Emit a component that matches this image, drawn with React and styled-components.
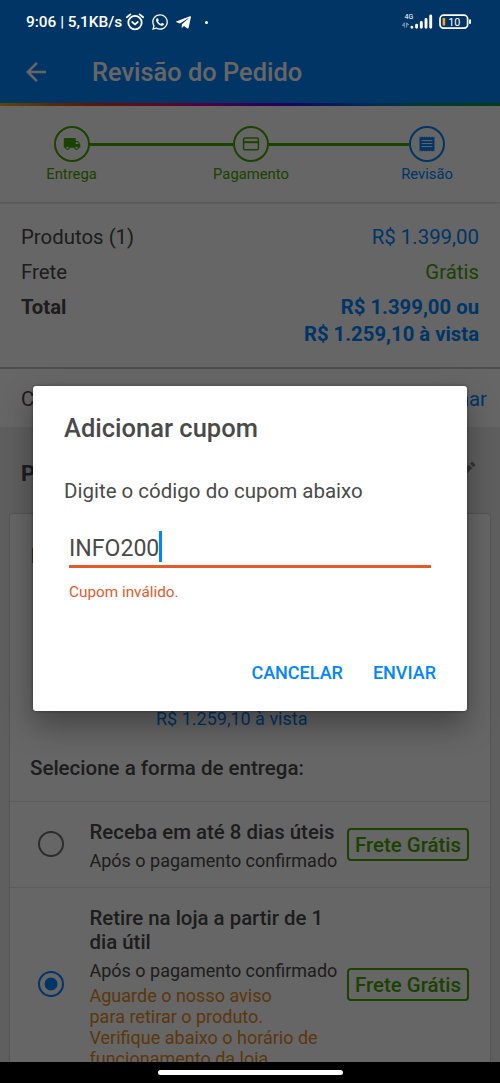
import React, { useState } from "react";
import styled, { createGlobalStyle } from "styled-components";
import { MdArrowBack, MdEdit, MdLocalShipping } from "react-icons/md";
import { FaTelegramPlane, FaWhatsapp } from "react-icons/fa";

const BLUE = "#0086ff";
const GREEN = "#47a500";

const totals = [
  { label: "Produtos (1)", values: ["R$ 1.399,00"], color: BLUE },
  { label: "Frete", values: ["Grátis"], color: GREEN },
  {
    label: "Total",
    values: ["R$ 1.399,00 ou", "R$ 1.259,10 à vista"],
    color: BLUE,
    bold: true,
  },
];

const deliveries = [
  {
    id: "home",
    title: ["Receba em até 8 dias úteis"],
    note: "Após o pagamento confirmado",
    warning: [],
  },
  {
    id: "store",
    title: ["Retire na loja a partir de 1", "dia útil"],
    note: "Após o pagamento confirmado",
    warning: [
      "Aguarde o nosso aviso",
      "para retirar o produto.",
      "Verifique abaixo o horário de",
      "funcionamento da loja.",
    ],
  },
];

const AlarmIcon = () => (
  <svg width="20" height="18" viewBox="0 0 20 18" fill="none" stroke="#fff">
    <circle cx="10" cy="9.6" r="6.7" strokeWidth="1.8" />
    <path d="M1.8 4.2 5.4 1.4M18.2 4.2 14.6 1.4" strokeWidth="1.8" strokeLinecap="round" />
    <path d="m7.2 9 2.8 2.3L12.8 9" strokeWidth="1.7" strokeLinecap="round" />
  </svg>
);

const SignalIcon = () => (
  <svg width="32" height="20" viewBox="0 0 32 20">
    <text x="3.5" y="7" fill="#fff" fontSize="7" fontFamily="Roboto">
      4G
    </text>
    <path
      d="M3.4 10.8v4.8M3.4 10.8 1.4 13.4h2M5.6 15.6v-4.8l2 1.8-2 .4"
      stroke="#8ba3bc"
      strokeWidth=".9"
      fill="none"
    />
    <g stroke="#fff" strokeWidth="2.9" strokeLinecap="round">
      <path d="M10.9 15.2v.1M15.6 13.2v2.1M20.3 10.4v4.9M25 7.4v7.9M29.7 4v11.3" />
    </g>
  </svg>
);

const BatteryIcon = () => (
  <svg width="33" height="16" viewBox="0 0 33 16">
    <rect x="1" y="1.2" width="27.6" height="13" rx="3.6" fill="none" stroke="#fff" strokeWidth="1.7" />
    <rect x="3.6" y="4" width="2.6" height="7.4" rx=".4" fill="#f5a623" />
    <path d="M31 5.6v4.2" stroke="#fff" strokeWidth="2" />
    <text x="9.2" y="11.6" fill="#fff" fontSize="10.8" fontFamily="Roboto">
      10
    </text>
  </svg>
);

const CardIcon = () => (
  <svg width="18" height="14" viewBox="0 0 18 14" fill="none" stroke="currentColor">
    <rect x="1.6" y="1" width="14.8" height="11.8" rx="1.3" strokeWidth="1.5" />
    <path d="M1.6 5.2h14.8" strokeWidth="2" />
  </svg>
);

const ReceiptIcon = () => (
  <svg width="16" height="16" viewBox="0 0 16 16" fill="currentColor">
    <path d="M.5.6 1.7 1.4 2.9.6l1.3.8L5.4.6l1.3.8L8 .6l1.3.8 1.3-.8 1.2.8 1.3-.8 1.2.8 1.2-.8v14.8l-1.2-.8-1.2.8-1.3-.8-1.2.8-1.3-.8-1.3.8-1.3-.8-1.3.8-1.2-.8-1.3.8-1.2-.8-1.2.8z" />
    <path d="M2.6 4.6h10.8M2.6 7.6h10.8M2.6 10.6h10.8" stroke="#fff" strokeWidth="1" />
  </svg>
);

const App = () => {
  const [selected, setSelected] = useState("store");

  return (
    <Screen>
      <GlobalStyle />
      <Page>
        <Header>
          <MdArrowBack size={30} />
          <HeaderTitle>Revisão do Pedido</HeaderTitle>
        </Header>
        <Rainbow />

        <Stepper>
          <Step $color={GREEN}>
            <StepCircle>
              <MdLocalShipping size={18} />
            </StepCircle>
            <StepLabel>Entrega</StepLabel>
          </Step>
          <StepLine $grow={143.5} />
          <Step $color={GREEN}>
            <StepCircle>
              <CardIcon />
            </StepCircle>
            <StepLabel>Pagamento</StepLabel>
          </Step>
          <StepLine $grow={140} />
          <Step $color={BLUE}>
            <StepCircle>
              <ReceiptIcon />
            </StepCircle>
            <StepLabel>Revisão</StepLabel>
          </Step>
        </Stepper>

        <Summary>
          {totals.map((row) => (
            <SummaryRow key={row.label} $bold={row.bold}>
              <span>{row.label}</span>
              <SummaryValue $color={row.color}>
                {row.values.map((value) => (
                  <div key={value}>{value}</div>
                ))}
              </SummaryValue>
            </SummaryRow>
          ))}
        </Summary>

        <CouponRow>
          <span>Cupom</span>
          <CouponLink>Adicionar</CouponLink>
        </CouponRow>

        <SectionHead>
          <SectionTitle>Produtos</SectionTitle>
          <MdEdit size={22} />
        </SectionHead>

        <Card>
          <Product>
            <ProductTitle>Entregue por</ProductTitle>
            <ProductPrice>R$ 1.259,10 à vista</ProductPrice>
          </Product>
          <DeliveryTitle>Selecione a forma de entrega:</DeliveryTitle>
          {deliveries.map((item) => (
            <Delivery key={item.id} onClick={() => setSelected(item.id)}>
              <Radio $checked={selected === item.id} />
              <DeliveryText>
                {item.title.map((line) => (
                  <DeliveryName key={line}>{line}</DeliveryName>
                ))}
                <DeliveryNote>{item.note}</DeliveryNote>
                {item.warning.map((line) => (
                  <DeliveryWarning key={line}>{line}</DeliveryWarning>
                ))}
              </DeliveryText>
              <FreeBadge>Frete Grátis</FreeBadge>
            </Delivery>
          ))}
        </Card>
      </Page>

      <Overlay>
        <StatusBar>
          <StatusText>9:06 | 5,1KB/s</StatusText>
          <AlarmIcon />
          <FaWhatsapp size={18} />
          <FaTelegramPlane size={17} />
          <StatusDot />
          <StatusRight>
            <SignalIcon />
            <BatteryIcon />
          </StatusRight>
        </StatusBar>

        <Dialog>
          <DialogTitle>Adicionar cupom</DialogTitle>
          <DialogText>Digite o código do cupom abaixo</DialogText>
          <Field>
            <FieldValue>INFO200</FieldValue>
            <Caret />
          </Field>
          <FieldError>Cupom inválido.</FieldError>
          <DialogActions>
            <DialogButton>CANCELAR</DialogButton>
            <DialogButton>ENVIAR</DialogButton>
          </DialogActions>
        </Dialog>
      </Overlay>

      <NavBar>
        <HomePill />
      </NavBar>
    </Screen>
  );
};

export default App;

const GlobalStyle = createGlobalStyle`
  body {
    margin: 0;
    font-family: Roboto, "Liberation Sans", sans-serif;
  }

  * {
    box-sizing: border-box;
  }
`;

const Screen = styled.div`
  position: relative;
  width: 500px;
  height: 1083px;
  overflow: hidden;
  display: flex;
  flex-direction: column;
  background: #000;
`;

const Page = styled.div`
  height: 1062px;
  overflow: hidden;
  background: #eeeeee;
  color: #4a4a4a;
  font-size: 20.4px;
`;

const Header = styled.div`
  height: 103px;
  padding: 40px 21px 0;
  display: flex;
  align-items: center;
  gap: 41px;
  background: ${BLUE};
  color: #fff;
`;

const HeaderTitle = styled.div`
  font-size: 25.4px;
  font-weight: 500;
  line-height: 32px;
  padding-top: 1px;
`;

const Rainbow = styled.div`
  height: 3px;
  background: linear-gradient(
    90deg,
    #e8b810 0%,
    #e07000 10%,
    #e83c00 18%,
    #f01850 30%,
    #d000a0 40%,
    #8000d0 50%,
    #3c10e0 58%,
    #0068e0 72%,
    #009080 84%,
    #00a030 100%
  );
`;

const Stepper = styled.div`
  position: relative;
  height: 96px;
  padding: 20px 55px 0 53.5px;
  display: flex;
  background: #fff;
  box-shadow: 0 1px 2px rgba(0, 0, 0, 0.2);
`;

const Step = styled.div`
  width: 36px;
  display: flex;
  flex-direction: column;
  align-items: center;
  gap: 2px;
  color: ${({ $color }) => $color};
`;

const StepCircle = styled.div`
  width: 36px;
  height: 36px;
  display: flex;
  align-items: center;
  justify-content: center;
  border: 2px solid currentColor;
  border-radius: 50%;
`;

const StepLabel = styled.div`
  font-size: 14.8px;
  line-height: 20px;
  white-space: nowrap;
`;

const StepLine = styled.div`
  flex: ${({ $grow }) => $grow} 0 0;
  height: 3px;
  margin-top: 17px;
  background: ${GREEN};
`;

const Summary = styled.div`
  height: 167px;
  padding: 18px 21px 0;
  background: #fff;
  border-bottom: 2px solid #c4c4c4;
`;

const SummaryRow = styled.div`
  display: flex;
  justify-content: space-between;
  padding: 4px 0;
  font-size: ${({ $bold }) => ($bold ? "20.3px" : "20.4px")};
  font-weight: ${({ $bold }) => ($bold ? "bold" : "normal")};
  line-height: 27px;
`;

const SummaryValue = styled.div`
  color: ${({ $color }) => $color};
  text-align: right;
`;

const CouponRow = styled.div`
  height: 58px;
  padding: 2px 13px 0 21px;
  display: flex;
  align-items: center;
  justify-content: space-between;
  background: #fff;
`;

const CouponLink = styled.span`
  color: ${BLUE};
`;

const SectionHead = styled.div`
  height: 87px;
  padding: 6px 22px 0 21px;
  display: flex;
  align-items: center;
  justify-content: space-between;

  svg {
    margin-bottom: 7px;
    color: #8a8a8a;
  }
`;

const SectionTitle = styled.div`
  font-size: 22px;
  font-weight: bold;
`;

const Card = styled.div`
  margin: 0 10px;
  background: #fff;
  border-radius: 3px;
  box-shadow: 0 0 2px rgba(0, 0, 0, 0.35);
`;

const Product = styled.div`
  height: 220px;
  padding: 30px 20px 3px 21px;
  display: flex;
  flex-direction: column;
  justify-content: space-between;
`;

const ProductTitle = styled.div`
  font-weight: bold;
`;

const ProductPrice = styled.div`
  padding-left: 125px;
  color: ${BLUE};
  font-size: 18px;
  line-height: 24px;
`;

const DeliveryTitle = styled.div`
  height: 67px;
  padding: 0 20px;
  font-size: 20.5px;
  font-weight: 500;
  line-height: 68px;
`;

const Delivery = styled.div`
  padding: 12px 21px 12px 28px;
  display: flex;
  align-items: center;
  border-top: 1px solid #ececec;
  cursor: pointer;
`;

const Radio = styled.div`
  width: 26px;
  height: 26px;
  flex-shrink: 0;
  border: 2px solid ${({ $checked }) => ($checked ? BLUE : "#6e6e6e")};
  border-radius: 50%;
  background: ${({ $checked }) =>
    $checked ? `radial-gradient(circle, ${BLUE} 6px, transparent 6.8px)` : "none"};
`;

const DeliveryText = styled.div`
  flex: 1;
  margin-left: 25.5px;
  padding-top: 6px;
  white-space: nowrap;
`;

const DeliveryName = styled.div`
  font-weight: 500;
  line-height: 24.5px;
`;

const DeliveryNote = styled.div`
  margin: 5px 0 4px;
  font-size: 18px;
  line-height: 21px;
`;

const DeliveryWarning = styled.div`
  color: #e58a1e;
  font-size: 18px;
  line-height: 21.1px;
`;

const FreeBadge = styled.div`
  width: 122px;
  height: 33px;
  flex-shrink: 0;
  border: 2px solid ${GREEN};
  border-radius: 4px;
  color: ${GREEN};
  font-weight: 500;
  line-height: 31px;
  text-align: center;
`;

/* Dimmed layer, it stops above the navigation bar */
const Overlay = styled.div`
  position: absolute;
  inset: 0 0 21px;
  background: rgba(0, 0, 0, 0.6);
`;

const StatusBar = styled.div`
  height: 44px;
  padding: 0 28px 0 26px;
  display: flex;
  align-items: center;
  color: #fff;

  svg {
    flex-shrink: 0;
  }

  svg + svg {
    margin-left: 6px;
  }
`;

const StatusText = styled.div`
  margin-right: 3px;
  font-size: 15.4px;
  font-weight: 500;
  white-space: nowrap;
`;

const StatusDot = styled.div`
  width: 3px;
  height: 3px;
  margin-left: 13px;
  border-radius: 50%;
  background: #fff;
`;

const StatusRight = styled.div`
  margin-left: auto;
  display: flex;
  align-items: center;
`;

const Dialog = styled.div`
  width: 434px;
  height: 325px;
  margin: 342px 0 0 33px;
  padding: 26px 31px 0;
  display: flex;
  flex-direction: column;
  background: #fff;
  border-radius: 3px;
  box-shadow: 0 14px 30px rgba(0, 0, 0, 0.35), 0 0 3px rgba(0, 0, 0, 0.4);
  color: #4a4a4a;
`;

const DialogTitle = styled.div`
  font-size: 25.5px;
  font-weight: 500;
  line-height: 32px;
`;

const DialogText = styled.div`
  margin-top: 34px;
  font-size: 20.5px;
  line-height: 26px;
`;

const Field = styled.div`
  width: 362px;
  height: 37px;
  margin: 27px 0 0 5px;
  display: flex;
  align-items: flex-start;
  border-bottom: 3px solid #e45a2c;
`;

const FieldValue = styled.span`
  font-size: 23.1px;
  line-height: 35px;
`;

const Caret = styled.span`
  width: 3px;
  height: 31px;
  margin-left: -0.5px;
  background: ${BLUE};
`;

const FieldError = styled.div`
  margin: 14px 0 0 5px;
  color: #e45a2c;
  font-size: 15.3px;
  line-height: 20px;
`;

const DialogActions = styled.div`
  margin-top: 58px;
  display: flex;
  justify-content: flex-end;
  gap: 30px;
`;

const DialogButton = styled.button`
  padding: 0;
  border: none;
  background: none;
  color: ${BLUE};
  font-family: inherit;
  font-size: 18px;
  font-weight: 500;
  line-height: 26px;
`;

const NavBar = styled.div`
  height: 21px;
  padding-top: 8px;
  display: flex;
  justify-content: center;
`;

const HomePill = styled.div`
  width: 185px;
  height: 5px;
  border-radius: 3px;
  background: #fff;
`;
